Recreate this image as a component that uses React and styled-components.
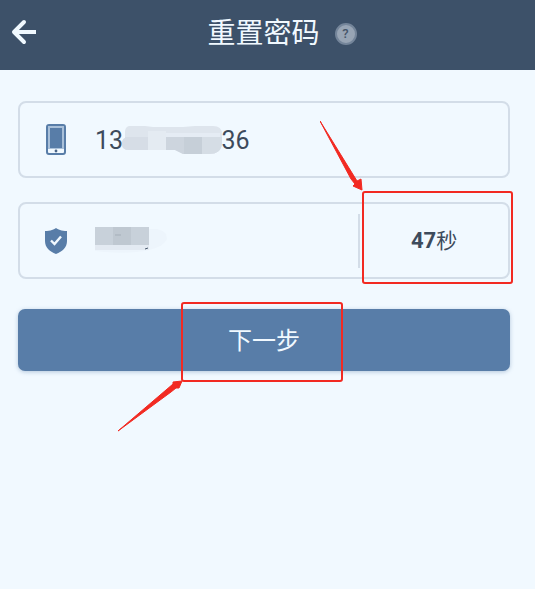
import React, { useState } from 'react';
import styled, { createGlobalStyle } from 'styled-components';

const GlobalStyle = createGlobalStyle`
  * {
    box-sizing: border-box;
  }

  body {
    margin: 0;
    background: #f1f9ff;
    color: #3d4b5c;
    font-family: Roboto, "Noto Sans CJK SC", sans-serif;
  }

  button,
  input {
    font-family: inherit;
    color: inherit;
  }
`;

const Page = styled.div`
  min-height: 100vh;
`;

const Header = styled.header`
  display: grid;
  grid-template-columns: 1fr auto 1fr;
  align-items: center;
  column-gap: 15px;
  height: 70px;
  padding: 0 18px 6px 10px;
  background: #3d5169;
`;

const IconButton = styled.button`
  display: flex;
  justify-self: start;
  padding: 0;
  border: none;
  background: none;
  cursor: pointer;
`;

const Title = styled.h1`
  margin: 4px 0 0;
  color: #f1f9ff;
  font-size: 28px;
  font-weight: 400;
  line-height: 40px;
`;

const HelpButton = styled.button`
  justify-self: start;
  width: 22px;
  height: 22px;
  margin-top: 4px;
  padding: 0;
  border: 2px solid #74859a;
  border-radius: 50%;
  background: #98a5b5;
  && {
    color: #46566a;
  }
  font-size: 13px;
  font-weight: 500;
  line-height: 18px;
  cursor: pointer;
`;

const Form = styled.form`
  display: flex;
  flex-direction: column;
  gap: 24px;
  padding: 31px 25px 31px 18px;
`;

const Field = styled.div`
  display: flex;
  align-items: center;
  height: 77px;
  border: 2px solid #d3dde8;
  border-radius: 8px;
`;

const FieldIcon = styled.label`
  display: flex;
  flex: none;
  justify-content: center;
  width: 72px;
`;

const InputWrapper = styled.div`
  position: relative;
  flex: 1;
  min-width: 0;
  margin-left: 3px;
`;

const TextInput = styled.input`
  display: block;
  width: 100%;
  height: 48px;
  padding: 2px 0 0;
  border: none;
  outline: none;
  background: none;
  font-size: 25px;
`;

const Mosaic = styled.svg`
  position: absolute;
  top: 8px;
  left: ${({ $left }) => $left}px;
  pointer-events: none;
`;

const Countdown = styled.div`
  position: relative;
  display: flex;
  flex: none;
  align-items: center;
  width: 150px;
  height: 54px;
  border-left: 2px solid #d3dde8;
`;

const CountdownButton = styled.button`
  width: 100%;
  height: 100%;
  padding: 0 0 4px;
  border: none;
  background: none;
  font-size: 21px;
`;

const Seconds = styled.span`
  font-size: 22px;
  font-weight: 700;
`;

const SubmitRow = styled.div`
  position: relative;
  margin-top: 6px;
`;

const SubmitButton = styled.button`
  display: block;
  width: 100%;
  height: 62px;
  padding: 0 0 4px;
  border: none;
  border-radius: 7px;
  background: #587da8;
  box-shadow: 0 1px 4px rgba(88, 125, 168, 0.4);
  && {
    color: #f1f9ff;
  }
  font-size: 24px;
  cursor: pointer;
`;

const Highlight = styled.div`
  position: absolute;
  inset: ${({ $inset }) => $inset};
  border: 2px solid #f22a22;
  border-radius: 3px;
  pointer-events: none;
`;

const Arrow = styled.svg`
  position: absolute;
  right: 100%;
  ${({ $from }) => ($from === 'above' ? 'bottom: 100%;' : 'top: 100%;')}
`;

const BackIcon = () => (
  <svg width="28" height="28" viewBox="0 0 28 28" fill="none" stroke="#f1f9ff">
    <path d="M14 4L4 14l10 10" strokeWidth="4" strokeLinecap="round" strokeLinejoin="round" />
    <path d="M5 14h21" strokeWidth="4" />
  </svg>
);

const PhoneIcon = () => (
  <svg width="20" height="31" viewBox="0 0 20 31">
    <rect x="1" y="1" width="18" height="29" rx="2" fill="#f1f9ff" stroke="#587da8" strokeWidth="2" />
    <rect x="2" y="2" width="16" height="23" fill="#a9c0d9" />
    <rect x="4" y="4" width="12" height="20" fill="#587da8" />
    <circle cx="10" cy="27" r="1.4" fill="#4a6587" />
  </svg>
);

const ShieldIcon = () => (
  <svg width="22" height="26" viewBox="0 0 22 26">
    <path
      d="M11 0c1.600 1.500 5.500 3 11 3v10c0 6.500-4.500 10.500-11 13C4.500 23.500 0 19.500 0 13V3c5.500 0 9.400-1.500 11-3z"
      fill="#587da8"
    />
    <path d="M6 12.500l3.500 3.500L16 8.500" fill="none" stroke="#f1f9ff" strokeWidth="2.400" />
  </svg>
);

// figure spaces keep the hidden digits' width
const maskedPhone = `13${'\u2007'.repeat(7)}36`;

const App = () => {
  const [phone, setPhone] = useState(maskedPhone);
  const [code, setCode] = useState('');

  return (
    <Page>
      <GlobalStyle />
      <Header>
        <IconButton type="button" aria-label="返回">
          <BackIcon />
        </IconButton>
        <Title>重置密码</Title>
        <HelpButton type="button">?</HelpButton>
      </Header>

      <Form onSubmit={(e) => e.preventDefault()}>
        <Field>
          <FieldIcon htmlFor="phone" aria-label="手机号">
            <PhoneIcon />
          </FieldIcon>
          <InputWrapper>
            <TextInput
              id="phone"
              type="tel"
              value={phone}
              onChange={(e) => setPhone(e.target.value)}
            />
            <Mosaic $left={26} width="102" height="32" viewBox="0 0 102 32">
              <clipPath id="phone-mask">
                <path d="M8 2H24L32 3H62L74 2H92Q101 2 101 10V20Q100 30 88 30H62L54 26H8Q1 26 1 20Q1 15 4 14V8Q4 3 8 2z" />
              </clipPath>
              <g clipPath="url(#phone-mask)">
                <rect width="102" height="32" fill="#dee5ed" />
                <rect x="0" y="13" width="27" height="19" fill="#d6dde6" />
                <rect x="27" y="7" width="18" height="25" fill="#e4ebf2" />
                <rect x="45" y="13" width="18" height="19" fill="#cdd5de" />
                <rect x="63" y="13" width="18" height="19" fill="#c6cfd8" />
                <rect x="81" y="13" width="21" height="19" fill="#d5dde5" />
                <rect x="45" y="9" width="54" height="4" fill="#e5ecf4" />
              </g>
            </Mosaic>
          </InputWrapper>
        </Field>

        <Field>
          <FieldIcon htmlFor="code" aria-label="验证码">
            <ShieldIcon />
          </FieldIcon>
          <InputWrapper>
            <TextInput
              id="code"
              inputMode="numeric"
              value={code}
              onChange={(e) => setCode(e.target.value)}
            />
            <Mosaic $left={0} width="72" height="32" viewBox="0 0 72 32">
              <path d="M0 4H62Q72 6 72 14Q68 22 54 25Q36 29 10 27L0 26z" fill="#edf5fc" />
              <rect y="20" width="54" height="5" fill="#e3eaf2" />
              <rect y="2" width="54" height="18" fill="#c8d1da" />
              <rect x="18" y="2" width="18" height="18" fill="#bfc8d1" />
              <path d="M20 10h6" stroke="#a5afb9" />
              <path d="M50 24l3-1" stroke="#46566a" />
            </Mosaic>
          </InputWrapper>
          <Countdown>
            <CountdownButton type="button">
              <Seconds>47</Seconds>秒
            </CountdownButton>
            <Highlight $inset="-23px -5px -16px 2px">
              <Arrow $from="above" width="44" height="72" viewBox="0 0 44 72">
                <path
                  d="M0 0L37 60L41 58L42 69L33 65L35 63L31 58z"
                  fill="#f22a22"
                  stroke="#f22a22"
                  strokeLinejoin="round"
                />
              </Arrow>
            </Highlight>
          </Countdown>
        </Field>

        <SubmitRow>
          <SubmitButton type="submit">下一步</SubmitButton>
          <Highlight $inset="-7px calc(50% - 79px) -11px calc(50% - 83px)">
            <Arrow $from="below" width="66" height="52" viewBox="0 0 66 52">
              <path
                d="M1 51L56 4L56 2L65 1L62 8L59 8L54 12z"
                fill="#f22a22"
                stroke="#f22a22"
                strokeLinejoin="round"
              />
            </Arrow>
          </Highlight>
        </SubmitRow>
      </Form>
    </Page>
  );
};

export default App;
